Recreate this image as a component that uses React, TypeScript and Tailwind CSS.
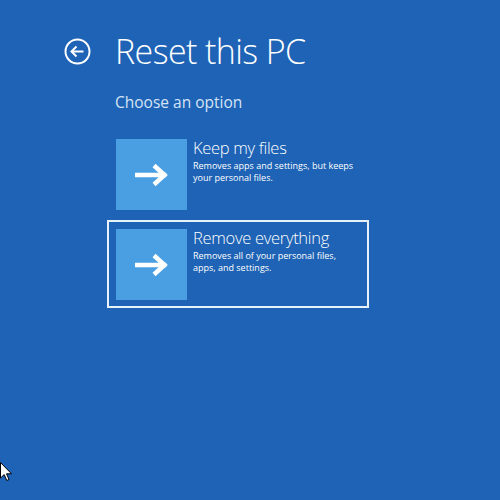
import React from "react";

function Arrow() {
  return (
    <svg width="34" height="24" viewBox="0 0 34 24" fill="none">
      <path d="M2 12H29" stroke="white" strokeWidth="4.5" strokeLinecap="square" />
      <path d="M19 2.5L29.5 12L19 21.5" stroke="white" strokeWidth="4.5" strokeLinejoin="miter" />
    </svg>
  );
}

function Option({ title, lines, selected }: { title: string; lines: string[]; selected?: boolean }) {
  return (
    <div
      className={
        "flex w-[262px] h-[88px] pt-[7px] pl-[7px] border-2 " +
        (selected ? "border-[#e8f0fa]" : "border-transparent")
      }
    >
      <div className="w-[71px] h-[71px] shrink-0 bg-[#4a9ee2] flex items-center justify-center">
        <Arrow />
      </div>
      <div className="ml-[6px] -mt-[2px] text-white whitespace-nowrap">
        <div className="text-[16.5px] leading-[22px] font-light tracking-[-0.3px]">{title}</div>
        <div className="text-[9px] leading-[12px] mt-[1px]">
          {lines.map((l) => (
            <div key={l}>{l}</div>
          ))}
        </div>
      </div>
    </div>
  );
}

export default function App() {
  return (
    <div
      className="relative w-[500px] h-[500px] bg-[#1e63b5] overflow-hidden"
      style={{ fontFamily: '"Open Sans", "Noto Sans", sans-serif' }}
    >
      {/* Header */}
      <div className="flex items-center pl-[64px] pt-[28px]">
        <svg width="27" height="27" viewBox="0 0 27 27" fill="none">
          <circle cx="13.5" cy="13.5" r="12" stroke="white" strokeWidth="2" />
          <path d="M19.5 13.5H8" stroke="white" strokeWidth="2" />
          <path d="M12.5 8.5L7.5 13.5L12.5 18.5" stroke="white" strokeWidth="2" />
        </svg>
        <h1 className="ml-[24px] text-[34px] leading-[46px] font-light tracking-[-0.6px] text-white">
          Reset this PC
        </h1>
      </div>

      <div className="pl-[107px]">
        <p className="ml-[8px] mt-[17px] text-[15.5px] leading-[22px] text-[#d6e4f5]">Choose an option</p>

        {/* Options */}
        <div className="mt-[17px] flex flex-col gap-[2px]">
          <Option title="Keep my files" lines={["Removes apps and settings, but keeps", "your personal files."]} />
          <Option
            title="Remove everything"
            lines={["Removes all of your personal files,", "apps, and settings."]}
            selected
          />
        </div>
      </div>

      {/* Mouse cursor */}
      <svg className="absolute left-0 top-[462px]" width="12" height="20" viewBox="0 0 12 20">
        <path d="M0.5 0.5V16L4.2 12.6L6.8 18.5L9 17.5L6.5 11.8H11.5Z" fill="white" stroke="black" strokeWidth="1" />
      </svg>
    </div>
  );
}
